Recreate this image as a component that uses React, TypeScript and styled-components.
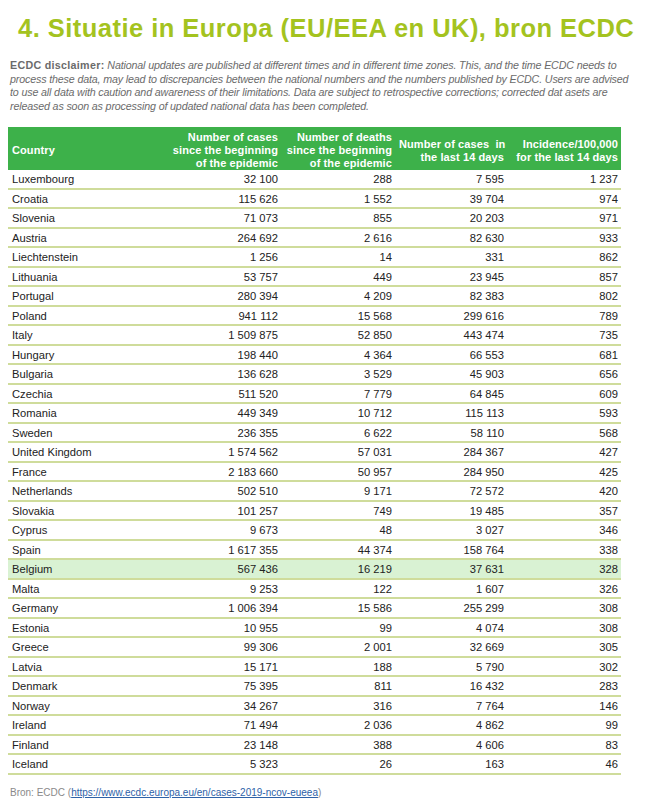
import React from "react";
import styled, { createGlobalStyle } from "styled-components";

const Global = createGlobalStyle`
  html, body { margin: 0; padding: 0; background: #fff; }
  body { font-family: "Liberation Sans", Arial, sans-serif; }
`;

const Page = styled.div`
  width: 649px;
  height: 800px;
  overflow: hidden;
  padding: 0 8px 0 8px;
  box-sizing: border-box;
`;

const Title = styled.h1`
  margin: 0;
  padding: 12px 0 0 10px;
  font-size: 25.5px;
  line-height: 33px;
  font-weight: bold;
  letter-spacing: 0.47px;
  color: #a4c31f;
  white-space: nowrap;
`;

const Disclaimer = styled.p`
  margin: 14px 0 0 2px;
  font-size: 10.7px;
  line-height: 13.5px;
  color: #6b6b6b;
  font-style: italic;
  letter-spacing: -0.15px;
  white-space: nowrap;
  b { font-style: normal; font-weight: bold; letter-spacing: 0.3px; }
`;

const Table = styled.table`
  margin-top: 14px;
  width: 613px;
  border-collapse: collapse;
  table-layout: fixed;
  font-size: 11.2px;
  color: #222;
`;

const Th = styled.th<{ $left?: boolean }>`
  background: #3db14a;
  color: #fff;
  font-weight: bold;
  font-size: 11px;
  line-height: 13px;
  text-align: ${(p) => (p.$left ? "left" : "right")};
  padding: 4px 3px 0 4px;
  height: 39px;
  letter-spacing: 0.1px;
  white-space: nowrap;
`;

const Tr = styled.tr<{ $hl?: boolean }>`
  background: ${(p) => (p.$hl ? "#d9f2d3" : "transparent")};
`;

const Td = styled.td<{ $left?: boolean }>`
  height: 15.5px;
  padding: 2px 3px 0 4px;
  text-align: ${(p) => (p.$left ? "left" : "right")};
  border-bottom: 2px solid #cfdc9b;
  white-space: nowrap;
  line-height: 15.5px;
`;

const Source = styled.div`
  margin: 12px 0 0 2px;
  font-size: 10px;
  color: #8a8a8a;
  a { color: #2e62a8; text-decoration: underline; }
`;

const rows: [string, string, string, string, string][] = [
  ["Luxembourg", "32 100", "288", "7 595", "1 237"],
  ["Croatia", "115 626", "1 552", "39 704", "974"],
  ["Slovenia", "71 073", "855", "20 203", "971"],
  ["Austria", "264 692", "2 616", "82 630", "933"],
  ["Liechtenstein", "1 256", "14", "331", "862"],
  ["Lithuania", "53 757", "449", "23 945", "857"],
  ["Portugal", "280 394", "4 209", "82 383", "802"],
  ["Poland", "941 112", "15 568", "299 616", "789"],
  ["Italy", "1 509 875", "52 850", "443 474", "735"],
  ["Hungary", "198 440", "4 364", "66 553", "681"],
  ["Bulgaria", "136 628", "3 529", "45 903", "656"],
  ["Czechia", "511 520", "7 779", "64 845", "609"],
  ["Romania", "449 349", "10 712", "115 113", "593"],
  ["Sweden", "236 355", "6 622", "58 110", "568"],
  ["United Kingdom", "1 574 562", "57 031", "284 367", "427"],
  ["France", "2 183 660", "50 957", "284 950", "425"],
  ["Netherlands", "502 510", "9 171", "72 572", "420"],
  ["Slovakia", "101 257", "749", "19 485", "357"],
  ["Cyprus", "9 673", "48", "3 027", "346"],
  ["Spain", "1 617 355", "44 374", "158 764", "338"],
  ["Belgium", "567 436", "16 219", "37 631", "328"],
  ["Malta", "9 253", "122", "1 607", "326"],
  ["Germany", "1 006 394", "15 586", "255 299", "308"],
  ["Estonia", "10 955", "99", "4 074", "308"],
  ["Greece", "99 306", "2 001", "32 669", "305"],
  ["Latvia", "15 171", "188", "5 790", "302"],
  ["Denmark", "75 395", "811", "16 432", "283"],
  ["Norway", "34 267", "316", "7 764", "146"],
  ["Ireland", "71 494", "2 036", "4 862", "99"],
  ["Finland", "23 148", "388", "4 606", "83"],
  ["Iceland", "5 323", "26", "163", "46"],
];

export default function App() {
  return (
    <Page>
      <Global />
      <Title>4. Situatie in Europa (EU/EEA en UK), bron ECDC</Title>
      <Disclaimer>
        <b>ECDC disclaimer:</b> National updates are published at different times and in different time zones. This, and the time ECDC needs to
        <br />
        process these data, may lead to discrepancies between the national numbers and the numbers published by ECDC. Users are advised
        <br />
        to use all data with caution and awareness of their limitations. Data are subject to retrospective corrections; corrected dat asets are
        <br />
        released as soon as processing of updated national data has been completed.
      </Disclaimer>
      <Table>
        <colgroup>
          <col style={{ width: 157 }} />
          <col style={{ width: 116 }} />
          <col style={{ width: 114 }} />
          <col style={{ width: 112 }} />
          <col style={{ width: 114 }} />
        </colgroup>
        <thead>
          <tr>
            <Th $left>Country</Th>
            <Th>Number of cases<br />since the beginning<br />of the epidemic</Th>
            <Th>Number of deaths<br />since the beginning<br />of the epidemic</Th>
            <Th>Number of cases&nbsp; in<br />the last 14 days</Th>
            <Th>Incidence/100,000<br />for the last 14 days</Th>
          </tr>
        </thead>
        <tbody>
          {rows.map((r) => (
            <Tr key={r[0]} $hl={r[0] === "Belgium"}>
              <Td $left>{r[0]}</Td>
              <Td>{r[1]}</Td>
              <Td>{r[2]}</Td>
              <Td>{r[3]}</Td>
              <Td>{r[4]}</Td>
            </Tr>
          ))}
        </tbody>
      </Table>
      <Source>
        Bron: ECDC (<a href="#">https://www.ecdc.europa.eu/en/cases-2019-ncov-eueea</a>)
      </Source>
    </Page>
  );
}
